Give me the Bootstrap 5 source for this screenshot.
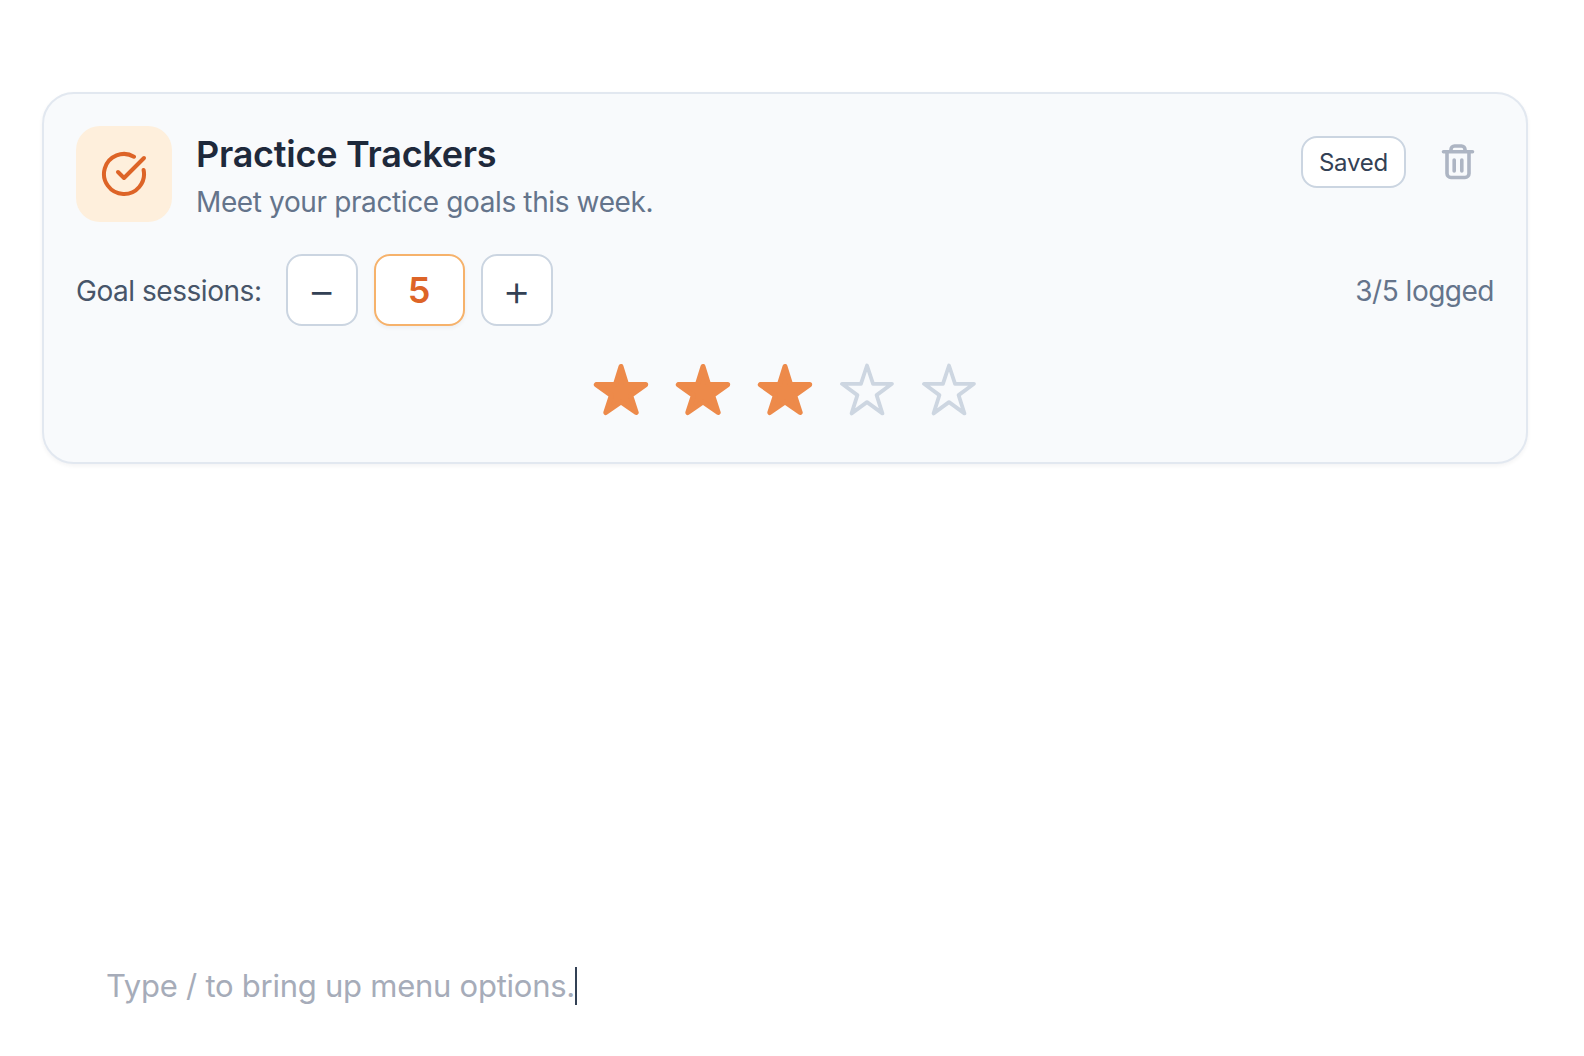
<!DOCTYPE html>
<html lang="en">
<head>
<meta charset="utf-8">
<title>Practice Trackers</title>
<link href="https://cdn.jsdelivr.net/npm/bootstrap@5.3.0/dist/css/bootstrap.min.css" rel="stylesheet">
<style>
body{background:#fff;font-family:Inter,"Liberation Sans",sans-serif;margin:0;}
.page-wrap{padding:92px 56px 0 42px;}
.tracker-card{background:#f8fafc;border:2px solid #e2e8f0;border-radius:32px;padding:32px;box-shadow:0 2px 4px rgba(15,23,42,.05);}
.icon-tile{width:96px;height:96px;background:#feefdc;border-radius:24px;flex:none;}
.tracker-title{font-size:36px;line-height:48px;font-weight:600;color:#1e293b;margin:4px 0 0;letter-spacing:-.25px;}
.tracker-sub{font-size:28px;line-height:40px;color:#64748b;margin:4px 0 0;letter-spacing:-.38px;}
.saved-pill{height:52px;width:105px;background:#fff;border:2px solid #cbd5e1;border-radius:16px;color:#334155;font-size:24px;letter-spacing:-.2px;padding-top:2px;}
.trash-box{width:72px;height:72px;}
.goal-row{margin-top:32px;}
.goal-label{font-size:28px;color:#475569;letter-spacing:-.46px;padding-top:1px;}
.step-btn{width:72px;height:72px;background:#fff;border:2px solid #cbd5e1;border-radius:16px;color:#334155;font-size:44px;font-weight:300;line-height:1;padding:0 0 1px;}
.step-val{width:91px;height:72px;background:#fff;border:2px solid #f6b26b;border-radius:16px;color:#dd6427;font-size:36px;font-weight:600;box-shadow:0 2px 4px rgba(15,23,42,.05);}
.logged{font-size:28px;color:#64748b;letter-spacing:-.5px;padding-top:1px;}
.star-row{gap:26px;margin-top:37px;margin-bottom:14px;}
.star-row svg{display:block;}
.type-hint{margin-top:502px;padding-left:64px;font-size:31px;line-height:40px;color:#a6acb9;letter-spacing:-.25px;}
.caret-bar{display:inline-block;width:2px;height:38px;background:#334155;vertical-align:-8px;}
</style>
</head>
<body>
<div class="page-wrap">
  <div class="tracker-card">
    <div class="d-flex align-items-start">
      <div class="icon-tile d-flex align-items-center justify-content-center">
        <svg width="48" height="48" viewBox="0 0 24 24" fill="none" stroke="#dd6427" stroke-width="2" stroke-linecap="round" stroke-linejoin="round"><path d="M21.801 10A10 10 0 1 1 17 3.335"/><path d="m9 11 3 3L22 4"/></svg>
      </div>
      <div class="ms-4 flex-grow-1">
        <h2 class="tracker-title">Practice Trackers</h2>
        <p class="tracker-sub">Meet your practice goals this week.</p>
      </div>
      <div class="d-flex align-items-center gap-3">
        <span class="saved-pill d-flex align-items-center justify-content-center">Saved</span>
        <span class="trash-box d-flex align-items-center justify-content-center">
          <svg width="36" height="40" viewBox="0 0 36 40" fill="none" stroke="#adb5c3" stroke-width="3.6" stroke-linecap="round" stroke-linejoin="round"><path d="M3.5 9.7h29"/><path d="M11 9V7.5A3.5 3.5 0 0 1 14.5 4h7A3.5 3.5 0 0 1 25 7.5V9"/><path d="M7 10v21.5a4 4 0 0 0 4 4h14a4 4 0 0 0 4-4V10"/><path d="M14.2 18v11"/><path d="M21.8 18v11"/></svg>
        </span>
      </div>
    </div>
    <div class="goal-row d-flex align-items-center">
      <span class="goal-label me-4">Goal sessions:</span>
      <div class="d-flex gap-3">
        <button type="button" class="step-btn">−</button>
        <span class="step-val d-flex align-items-center justify-content-center">5</span>
        <button type="button" class="step-btn">+</button>
      </div>
      <span class="logged ms-auto">3/5 logged</span>
    </div>
    <div class="star-row d-flex justify-content-center">
      <svg width="56" height="53" viewBox="0 0 56 53" fill="#ed8a4a" stroke="#ed8a4a" stroke-width="5" stroke-linejoin="round"><path d="M28 3.5 33.6 21.6 52.7 21.6 37.6 32.4 43.2 49.5 28 39 12.8 49.5 18.4 32.4 3.3 21.6 22.4 21.6Z"/></svg>
      <svg width="56" height="53" viewBox="0 0 56 53" fill="#ed8a4a" stroke="#ed8a4a" stroke-width="5" stroke-linejoin="round"><path d="M28 3.5 33.6 21.6 52.7 21.6 37.6 32.4 43.2 49.5 28 39 12.8 49.5 18.4 32.4 3.3 21.6 22.4 21.6Z"/></svg>
      <svg width="56" height="53" viewBox="0 0 56 53" fill="#ed8a4a" stroke="#ed8a4a" stroke-width="5" stroke-linejoin="round"><path d="M28 3.5 33.6 21.6 52.7 21.6 37.6 32.4 43.2 49.5 28 39 12.8 49.5 18.4 32.4 3.3 21.6 22.4 21.6Z"/></svg>
      <svg width="56" height="53" viewBox="0 0 56 53" fill="none" stroke="#cdd6e1" stroke-width="3.8" stroke-linejoin="round"><path d="M28 2.5 34.05 20.8 53 20.8 37.6 32.1 43.4 50.4 28 39.1 12.6 50.4 18.4 32.1 3 20.8 21.95 20.8Z"/></svg>
      <svg width="56" height="53" viewBox="0 0 56 53" fill="none" stroke="#cdd6e1" stroke-width="3.8" stroke-linejoin="round"><path d="M28 2.5 34.05 20.8 53 20.8 37.6 32.1 43.4 50.4 28 39.1 12.6 50.4 18.4 32.1 3 20.8 21.95 20.8Z"/></svg>
    </div>
  </div>
  <div class="type-hint">Type / to bring up menu options.<span class="caret-bar"></span></div>
</div>
<script src="https://cdn.jsdelivr.net/npm/bootstrap@5.3.0/dist/js/bootstrap.bundle.min.js"></script>
</body>
</html>
